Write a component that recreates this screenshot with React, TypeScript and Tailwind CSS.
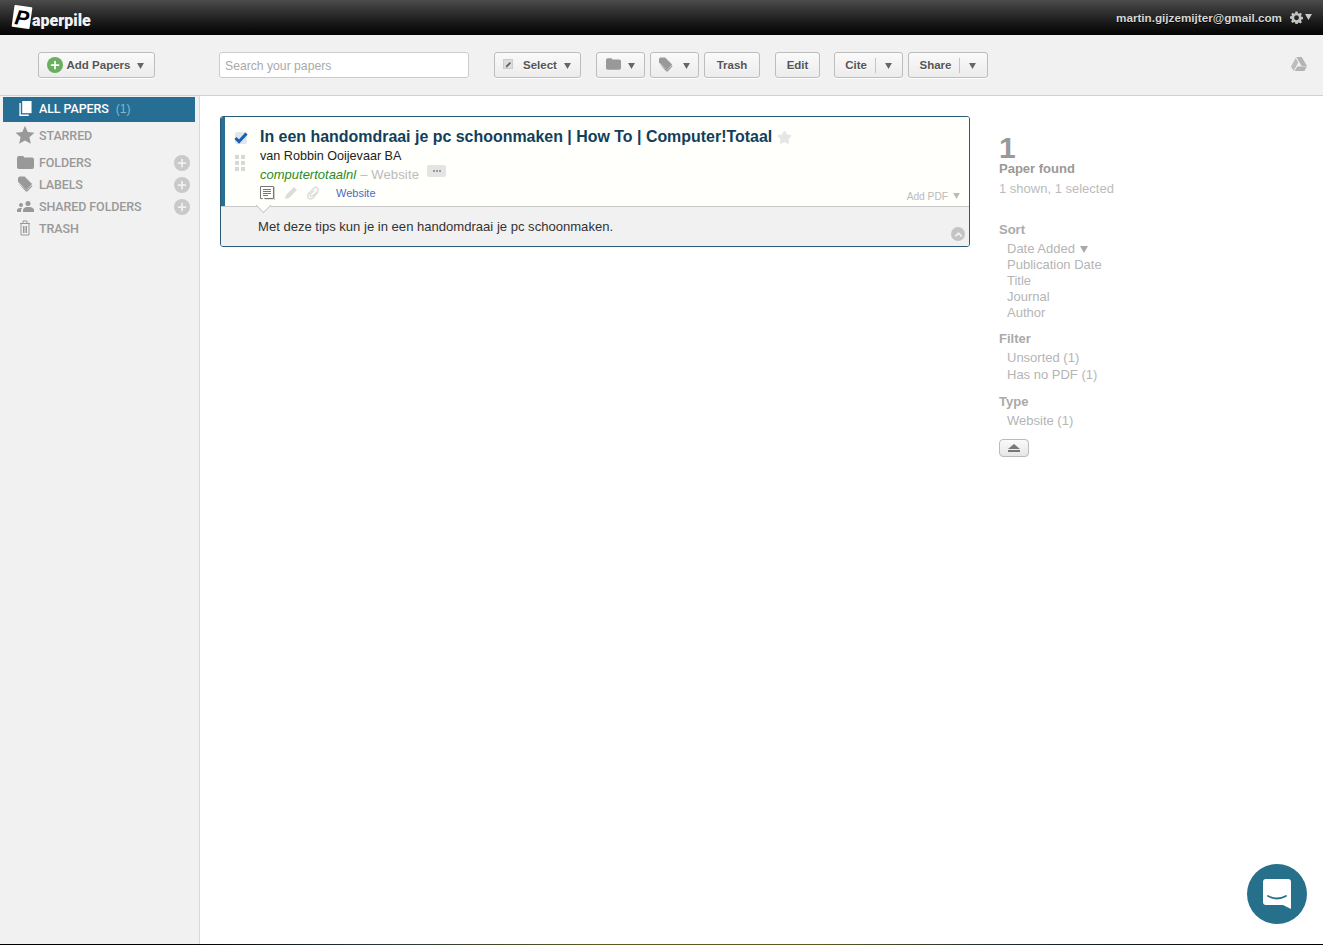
import { ChevronUp, Plus, Star } from 'lucide-react';

const arial = 'font-["Liberation_Sans",Arial,sans-serif]';

const Caret = ({ className = '' }: { className?: string }) => (
  <svg viewBox="0 0 8 7" className={`w-[7px] h-[6px] fill-current ${className}`}>
    <path d="M0 0h8L4 7z" />
  </svg>
);

const FolderIcon = ({ className = '' }: { className?: string }) => (
  <svg viewBox="0 0 17 13" className={`fill-current ${className}`}>
    <path d="M0 2q0-2 2-2h4q1 0 1 1.500h8q2 0 2 2V11q0 2-2 2H2q-2 0-2-2z" />
  </svg>
);

const TagIcon = ({ className = '' }: { className?: string }) => (
  <svg viewBox="0 0 16 16" className={`fill-current ${className}`}>
    <path d="M0 1.500 1.500 0H7l8 8-6 6.500-9-9z" />
    <path d="M0 7l8.500 9H10l5.500-6-.8-.8-5.400 5.500z" />
  </svg>
);

const Btn = ({ children, className = '' }: { children: React.ReactNode; className?: string }) => (
  <button className={`h-[26px] pt-[2px] flex items-center justify-center rounded-[3px] border border-[#bdbdbd] bg-gradient-to-b from-[#fafafa] to-[#ececec] text-[11.5px] font-bold text-[#555] shadow-[0_1px_0_#fff] [text-shadow:0_1px_0_#fff] ${className}`}>
    {children}
  </button>
);

const Split = ({ label, className }: { label: string; className: string }) => (
  <Btn className={className}>
    <span>{label}</span>
    <span className="w-px h-[15px] bg-[#c4c4c4] ml-[8px] mr-[9px] -mt-[1px]" />
    <Caret className="text-[#666]" />
  </Btn>
);

const NavRow = ({ icon, label, add, className = '' }: { icon: React.ReactNode; label: string; add?: boolean; className?: string }) => (
  <div className={`flex items-center h-[22px] ml-[3px] w-[192px] text-[#999] ${className}`}>
    <div className="w-[36px] flex justify-center pl-[8px] -mt-[2px] text-[#999]">{icon}</div>
    <span className='font-["Roboto",sans-serif] font-medium text-[12.5px] tracking-[-0.1px] flex-1'>{label}</span>
    {add && (
      <span className="w-[16px] h-[16px] rounded-full bg-[#c9c9c9] flex items-center justify-center mr-[5px]">
        <Plus size={12} strokeWidth={3.5} className="text-[#f1f1f1]" />
      </span>
    )}
  </div>
);

const Facet = ({ title, items, className = '' }: { title: string; items: React.ReactNode[]; className?: string }) => (
  <div className={className}>
    <div className="text-[13px] font-bold text-[#aaa] leading-[16px]">{title}</div>
    <div className="pl-[8px] mt-[3px] text-[#b5b5b5] text-[13px] leading-[16px]">
      {items.map((t, i) => <div key={i}>{t}</div>)}
    </div>
  </div>
);

export default function App() {
  return (
    <div className={`w-[1323px] h-[945px] overflow-hidden flex flex-col bg-white relative ${arial}`}>
      <header className="h-[35px] shrink-0 bg-gradient-to-b from-[#4c4c4c] to-[#040404] flex items-center justify-between">
        <div className="flex items-center pl-[13px] pt-[1px]">
          <div className='w-[18px] h-[22px] bg-white rotate-[8deg] rounded-[1px] text-black font-["Liberation_Sans"] italic font-bold text-[21px] leading-[23px] text-center -mt-[2px]'>P</div>
          <span className='font-["Roboto",sans-serif] font-black text-[16px] text-[#f2f2f2] ml-[1px] mt-[6px] leading-[20px]'>aperpile</span>
        </div>
        <div className="flex items-center pr-[11px] text-[#d6d6d6] pt-[1px]">
          <span className="text-[11.7px] font-bold [text-shadow:0_1px_0_#000] mr-[8px]">martin.gijzemijter@gmail.com</span>
          <svg viewBox="0 0 24 24" className="w-[13px] h-[13px] fill-[#c4c4c4]">
            <path fillRule="evenodd" d="M10 1h4l.6 3.200 1.900.8L19.200 3.200 22 6l-1.800 2.700.8 1.900L24 11v4l-3 .6-.8 1.900 1.800 2.700-2.800 2.800-2.700-1.800-1.900.8L14 24h-4l-.6-3-1.900-.8L4.800 22 2 19.200l1.800-2.700-.8-1.900L0 14v-4l3-.6.8-1.900L2 6l2.800-2.800L7.500 5l1.900-.8zM12 8a4.500 4.500 0 1 0 0 9 4.500 4.500 0 0 0 0-9z" />
          </svg>
          <Caret className="ml-[2px] text-[#ccc] -mt-[2px]" />
        </div>
      </header>

      <div className="h-[61px] shrink-0 bg-[#f1f1f1] border-b border-[#d0d0d0] flex items-center pl-[38px] pb-[1px]">
        <Btn className="w-[117px] gap-[4px]">
          <span className="w-[16px] h-[16px] rounded-full bg-[#6aae5f] flex items-center justify-center -ml-[2px] -mt-[2px]">
            <Plus size={12} strokeWidth={3.5} className="text-white" />
          </span>
          <span>Add Papers</span>
          <Caret className="ml-[3px] text-[#666]" />
        </Btn>
        <input
          placeholder="Search your papers"
          className="ml-[64px] w-[250px] h-[26px] pt-[2px] rounded-[3px] border border-[#ccc] bg-white px-[5px] text-[12.2px] placeholder:text-[#aaa] outline-none"
        />
        <Btn className="ml-[25px] w-[87px]">
          <span className="w-[10px] h-[10px] bg-[#ddd] border border-[#ccc] flex items-center justify-center mr-[10px] -ml-[1px] -mt-[3px]">
            <svg viewBox="0 0 8 8" className="w-[7px] h-[7px] fill-[#666]"><path d="M1 7V5.500L5.500 1 7 2.500 2.500 7z" /></svg>
          </span>
          <span>Select</span>
          <Caret className="ml-[7px] text-[#666]" />
        </Btn>
        <Btn className="ml-[15px] w-[49px]">
          <FolderIcon className="w-[15px] h-[12px] text-[#999] -mt-[3px]" />
          <Caret className="ml-[7px] text-[#666]" />
        </Btn>
        <Btn className="ml-[5px] w-[49px]">
          <TagIcon className="w-[14px] h-[15px] text-[#999] -mt-[3px] -ml-[1px]" />
          <Caret className="ml-[10px] text-[#666]" />
        </Btn>
        <Btn className="ml-[5px] w-[56px]">Trash</Btn>
        <Btn className="ml-[15px] w-[45px]">Edit</Btn>
        <Split label="Cite" className="ml-[14px] w-[69px]" />
        <Split label="Share" className="ml-[5px] w-[80px]" />
        <svg viewBox="0 0 16 14" className="absolute left-[1291px] top-[57px] w-[16px] h-[14px] fill-[#b4b4b4]">
          <path d="M5.300 0h5.400L16 9h-5.300z" />
          <path d="M4.700 1 7.300 5.500 2.600 14 0 9.500z" opacity=".85" />
          <path d="M3.700 14l2.600-4.500H16L13.400 14z" />
        </svg>
      </div>

      <div className="flex-1 flex min-h-0">
        <aside className="w-[200px] shrink-0 bg-[#f1f1f1] border-r border-[#d9d9d9] pt-[1px]">
          <div className="flex items-center h-[25px] ml-[3px] w-[192px] bg-[#266e94] text-white">
            <div className="w-[36px] flex justify-center pl-[8px] -mt-[3px]">
              <svg viewBox="0 0 14 16" className="w-[14px] h-[15px] fill-white">
                <path d="M4 0h10v13H4z" />
                <path d="M2.500 2v12.500H11V16H1V2z" />
              </svg>
            </div>
            <span className='font-["Roboto",sans-serif] font-medium text-[12.5px] tracking-[-0.1px] -mt-[1px]'>ALL PAPERS</span>
            <span className="ml-[7px] text-[12px] text-[#8db4c9] -mt-[1px]">(1)</span>
          </div>
          <NavRow className="mt-[3px] h-[22px]" label="STARRED" icon={
            <svg viewBox="0 0 24 24" className="w-[20px] h-[20px] fill-[#999]"><path d="M12 1l3.300 7.400 8 .8-6 5.400 1.700 7.900L12 18.500l-7 4 1.700-7.900-6-5.400 8-.8z" /></svg>
          } />
          <NavRow className="mt-[5px]" label="FOLDERS" add icon={<FolderIcon className="w-[17px] h-[13px]" />} />
          <NavRow label="LABELS" add icon={<TagIcon className="w-[15px] h-[16px]" />} />
          <NavRow label="SHARED FOLDERS" add icon={
            <svg viewBox="0 0 17 11" className="w-[17px] h-[11px] fill-[#999]">
              <circle cx="11" cy="2.500" r="2.500" /><path d="M6 11V9q0-2 3-3h4q4 1 4 3v2z" />
              <circle cx="4" cy="4" r="2" /><path d="M0 11V9.500Q0 7 3 7h2Q4 8 4 11z" />
            </svg>
          } />
          <NavRow label="TRASH" icon={
            <svg viewBox="0 0 12 16" className="w-[12px] h-[16px] fill-none stroke-[#999]">
              <path d="M1 3.500h10M4 3V1h4v2M2 4v11h8V4M4.500 6v7M6 6v7M7.500 6v7" />
            </svg>
          } />
        </aside>

        <main className="flex-1 flex items-start pl-[20px] pt-[20px] rounded-tl-[3px]">
          <div className="w-[750px] h-[131px] rounded-[3px] border border-[#2b5a78] overflow-hidden flex flex-col shrink-0">
            <div className="h-[89px] bg-[#fffffb] border-l-[4px] border-[#266e94] flex relative">
              <div className="w-[35px] shrink-0 flex flex-col items-start pt-[15px] pl-[10px]">
                <span className="w-[12px] h-[12px] rounded-[2px] bg-[#dfe6ee] relative">
                  <svg viewBox="0 0 14 12" className="absolute -left-[1px] top-0 w-[14px] h-[12px] fill-none stroke-[#1a5fb0] stroke-[3]"><path d="M1.500 6l3.500 3.500L12.500 1.500" /></svg>
                </span>
                <div className="grid grid-cols-2 gap-[2px] mt-[11px] w-[10px]">
                  {[0, 1, 2, 3, 4, 5].map(i => <span key={i} className="w-[4px] h-[4px] bg-[#d8d8d8]" />)}
                </div>
              </div>
              <div className="flex-1 pt-[10px]">
                <div className="flex items-center h-[20px]">
                  <span className="text-[15.94px] font-bold text-[#123f5c] leading-[20px]">In een handomdraai je pc schoonmaken | How To | Computer!Totaal</span>
                  <Star size={15} className="ml-[5px] fill-[#e6e6e6] text-[#e6e6e6]" />
                </div>
                <div className="text-[12.6px] text-[#222] leading-[16px] mt-[1px]">van Robbin Ooijevaar BA</div>
                <div className="flex items-center text-[13px] leading-[18px] mt-[2px]">
                  <span className="italic text-[#2a8a1c]">computertotaalnl</span>
                  <span className="text-[#bbb] ml-[4px] tracking-[0.15px]">– Website</span>
                  <span className="ml-[8px] w-[19px] h-[12px] rounded-[2px] bg-[#e4e4e4] flex items-center justify-center gap-[1px] -mt-[8px]">
                    <span className="w-[2px] h-[2px] bg-[#999]" />
                    <span className="w-[2px] h-[2px] bg-[#999]" />
                    <span className="w-[2px] h-[2px] bg-[#999]" />
                  </span>
                </div>
                <div className="flex items-center h-[14px] mt-[2px]">
                  <svg viewBox="0 0 15 14" className="w-[15px] h-[14px] fill-none stroke-[#777]">
                    <path d="M.5.500h13v12h-13z" /><path d="M3 3.500h8M3 5.500h8M3 7.500h8M3 9.500h5" /><path d="M14.500 1v13H1" stroke="#ccc" />
                  </svg>
                  <svg viewBox="0 0 14 14" className="w-[14px] h-[14px] ml-[9px] fill-[#dcdcdc]"><path d="M1 13l1-4L10 1l3 3-8 8z" /></svg>
                  <svg viewBox="0 0 14 14" className="w-[14px] h-[14px] ml-[8px] fill-none stroke-[#dedede] stroke-[1.500]"><path d="M12 6 7 12Q4.500 14 2.500 12T3 7l5-5q2-1.500 3.500 0t0 3.500L6.500 10q-1 1-2 0t0-2L8 4.500" /></svg>
                  <a className="ml-[16px] text-[11px] text-[#4a6cc0]">Website</a>
                </div>
              </div>
              <div className="absolute right-[9px] bottom-[2px] flex items-center text-[10.2px] text-[#bbb]">
                Add PDF<Caret className="ml-[5px] w-[5px] h-[4px]" />
              </div>
            </div>
            <div className="flex-1 bg-[#f1f1f1] border-t border-[#c8c8c8] relative pl-[37px] pt-[12px] text-[13.07px] text-[#333] leading-[16px]">
              <span className="absolute left-[37px] -top-[1px] w-[11px] h-[11px] bg-[#fffffb] border-r border-b border-[#c8c8c8] rotate-45 -translate-y-[6px]" />
              Met deze tips kun je in een handomdraai je pc schoonmaken.
              <span className="absolute right-[4px] bottom-[5px] w-[14px] h-[14px] rounded-full bg-[#c4c4c4] flex items-center justify-center">
                <ChevronUp size={11} strokeWidth={3.5} className="text-[#f1f1f1]" />
              </span>
            </div>
          </div>

          <div className="ml-[29px] pt-[17px] w-[200px]">
            <div className="text-[30px] font-bold text-[#999] leading-[30px]">1</div>
            <div className="text-[13px] font-bold text-[#999] leading-[16px] -mt-[2px]">Paper found</div>
            <div className="text-[13px] text-[#bbb] leading-[16px] mt-[4px]">1 shown, 1 selected</div>
            <Facet className="mt-[25px]" title="Sort" items={[
              <span className="flex items-center">Date Added<Caret className="ml-[5px] w-[8px] h-[7px] text-[#aaa]" /></span>,
              'Publication Date', 'Title', 'Journal', 'Author',
            ]} />
            <Facet className="mt-[10px]" title="Filter" items={['Unsorted (1)', <span className="block mt-[1px]">Has no PDF (1)</span>]} />
            <Facet className="mt-[11px]" title="Type" items={['Website (1)']} />
            <button className="mt-[10px] w-[30px] h-[18px] rounded-[4px] border border-[#bbb] bg-gradient-to-b from-[#fafafa] to-[#e6e6e6] flex flex-col items-center justify-center gap-[1px]">
              <span className="w-0 h-0 border-l-[6px] border-r-[6px] border-b-[5px] border-l-transparent border-r-transparent border-b-[#777]" />
              <span className="w-[12px] h-[2px] bg-[#777]" />
            </button>
          </div>
        </main>
      </div>

      <div className="h-px shrink-0 bg-[linear-gradient(90deg,#000_14%,#24343a_28%,#5a5a20_45%,#5a5a20_62%,#1c2a30_76%,#000_100%)]" />

      <div className="absolute left-[1247px] top-[864px] w-[60px] h-[60px] rounded-full bg-[#26708c] flex items-center justify-center">
        <svg viewBox="0 0 28 30" className="w-[28px] h-[30px]">
          <path d="M3 0h22q3 0 3 3v27l-8-4H3q-3 0-3-3V3q0-3 3-3z" fill="#fff" />
          <path d="M5 17q9 5 18 0" fill="none" stroke="#26708c" strokeWidth="1.800" strokeLinecap="round" />
        </svg>
      </div>
    </div>
  );
}
